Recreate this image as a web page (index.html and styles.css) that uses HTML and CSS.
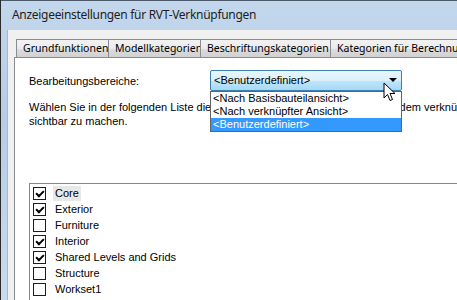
FILE: index.html
```html
<!DOCTYPE html>
<html lang="de">

<head>
    <meta charset="UTF-8">
    <title>Anzeigeeinstellungen für RVT-Verknüpfungen</title>
    <link rel="stylesheet" href="styles.css">
</head>

<body>

    <div class="window">
        <div class="titlebar">Anzeigeeinstellungen für RVT-Verknüpfungen</div>

        <div class="client">
            <div class="tabs">
                <div class="tab">Grundfunktionen</div>
                <div class="tab">Modellkategorien</div>
                <div class="tab">Beschriftungskategorien</div>
                <div class="tab">Kategorien für Berechnungen</div>
            </div>

            <div class="panel">
                <div class="field-row">
                    <label>Bearbeitungsbereiche:</label>
                    <div class="combo">
                        <span>&lt;Benutzerdefiniert&gt;</span>
                        <span class="arrow"></span>

                        <ul class="dropdown">
                            <li>&lt;Nach Basisbauteilansicht&gt;</li>
                            <li>&lt;Nach verknüpfter Ansicht&gt;</li>
                            <li class="selected">&lt;Benutzerdefiniert&gt;</li>
                        </ul>

                        <svg class="cursor" width="13" height="21" viewBox="0 0 13 21">
                            <path d="M1 1 L1 16 L4.5 12.5 L7 18.5 L9.5 17.5 L7 11.5 L12 11.5 Z"
                                fill="#fff" stroke="#000" stroke-width="1" stroke-linejoin="miter" />
                        </svg>
                    </div>
                </div>

                <p class="hint">
                    <span class="line">Wählen Sie in der folgenden Liste die gewünschten Bereiche aus, um sie in dem verknüpften Modell</span>
                    <span class="line">sichtbar zu machen.</span>
                </p>

                <div class="listbox">
                    <div class="item"><span class="check on"></span><span class="name focus">Core</span></div>
                    <div class="item"><span class="check on"></span><span class="name">Exterior</span></div>
                    <div class="item"><span class="check"></span><span class="name">Furniture</span></div>
                    <div class="item"><span class="check on"></span><span class="name">Interior</span></div>
                    <div class="item"><span class="check on"></span><span class="name">Shared Levels and Grids</span></div>
                    <div class="item"><span class="check"></span><span class="name">Structure</span></div>
                    <div class="item"><span class="check"></span><span class="name">Workset1</span></div>
                </div>
            </div>
        </div>
    </div>

</body>

</html>
```

FILE: styles.css
```css
body {
    margin: 0;
    width: 457px;
    height: 300px;
    overflow: hidden;
    background: #2b2b2b;
    font-family: "Liberation Sans", Arial, sans-serif;
    font-size: 11px;
    color: #000;
}

.window {
    height: 300px;
    margin-left: 1px;
    border-top: 1px solid #4a5a6a;
    background: linear-gradient(#c3d7ec, #b6cde6 40%, #c9dcef);
}

.titlebar {
    height: 29px;
    padding-left: 11px;
    line-height: 28px;
    font-family: "Noto Sans", sans-serif;
    font-size: 12px;
    letter-spacing: -0.3px;
    color: #1e1e1e;
    white-space: nowrap;
}

.client {
    margin-left: 6px;
    height: 270px;
    padding: 9px 0 0 6px;
    background: #f0f0f0;
    border-left: 1px solid #a8b8c8;
    box-sizing: border-box;
}

.tabs {
    display: flex;
    padding-left: 2px;
    height: 18px;
}

.tab {
    box-sizing: border-box;
    height: 19px;
    padding: 0 6px;
    line-height: 17px;
    border: 1px solid #898c95;
    border-bottom: none;
    margin-right: -1px;
    white-space: nowrap;
    font-family: "Noto Sans", sans-serif;
    font-size: 10.5px;
    background: linear-gradient(#f2f2f2, #ebebeb 50%, #dddddd 51%, #cfcfcf);
}

.tab:nth-child(1) { width: 93px; }
.tab:nth-child(2) { width: 93px; }
.tab:nth-child(3) { width: 131px; }

.panel {
    position: relative;
    height: 260px;
    background: #fff;
    border-left: 1px solid #898c95;
    border-top: 1px solid #898c95;
    padding: 12px 0 0 14px;
}

.field-row {
    display: flex;
    align-items: center;
    gap: 71px;
    height: 21px;
}

.combo {
    position: relative;
    box-sizing: border-box;
    width: 192px;
    height: 21px;
    padding-left: 3px;
    line-height: 19px;
    border: 1px solid #3c7fb1;
    border-radius: 2px;
    background: linear-gradient(#eaf6fd, #d9f0fc 50%, #bee6fd 51%, #a7d9f5);
}

.arrow {
    position: absolute;
    right: 4px;
    top: 7px;
    border-left: 4px solid transparent;
    border-right: 4px solid transparent;
    border-top: 4px solid #000;
}

.dropdown {
    position: absolute;
    left: -1px;
    top: 20px;
    width: 190px;
    margin: 0;
    padding: 0;
    list-style: none;
    background: #fff;
    border: 1px solid #646464;
    z-index: 2;
}

.dropdown li {
    height: 13px;
    line-height: 13px;
    padding-left: 2px;
    white-space: nowrap;
}

.dropdown li.selected {
    background: #3399ff;
    color: #fff;
}

.cursor {
    position: absolute;
    left: 172px;
    top: 11px;
    z-index: 3;
}

.hint {
    margin: 9px 0 0;
    line-height: 14px;
}

.hint .line {
    display: block;
    white-space: nowrap;
}

.listbox {
    margin-top: 55px;
    height: 140px;
    border-top: 1px solid #828790;
    border-left: 1px solid #828790;
    padding: 1px 0 0 3px;
}

.item {
    display: flex;
    align-items: center;
    height: 16px;
}

.check {
    box-sizing: border-box;
    width: 13px;
    height: 13px;
    border: 1px solid #1c1c1c;
    background: #fff;
    margin-right: 7px;
    position: relative;
}

.check.on::after {
    content: "";
    position: absolute;
    left: 2px;
    top: 1px;
    width: 6px;
    height: 3px;
    border-left: 2px solid #000;
    border-bottom: 2px solid #000;
    transform: rotate(-45deg) translate(-1px, 1px);
}

.name {
    padding: 0 2px;
    line-height: 15px;
}

.name.focus {
    background: #e8e8e8;
}
```
